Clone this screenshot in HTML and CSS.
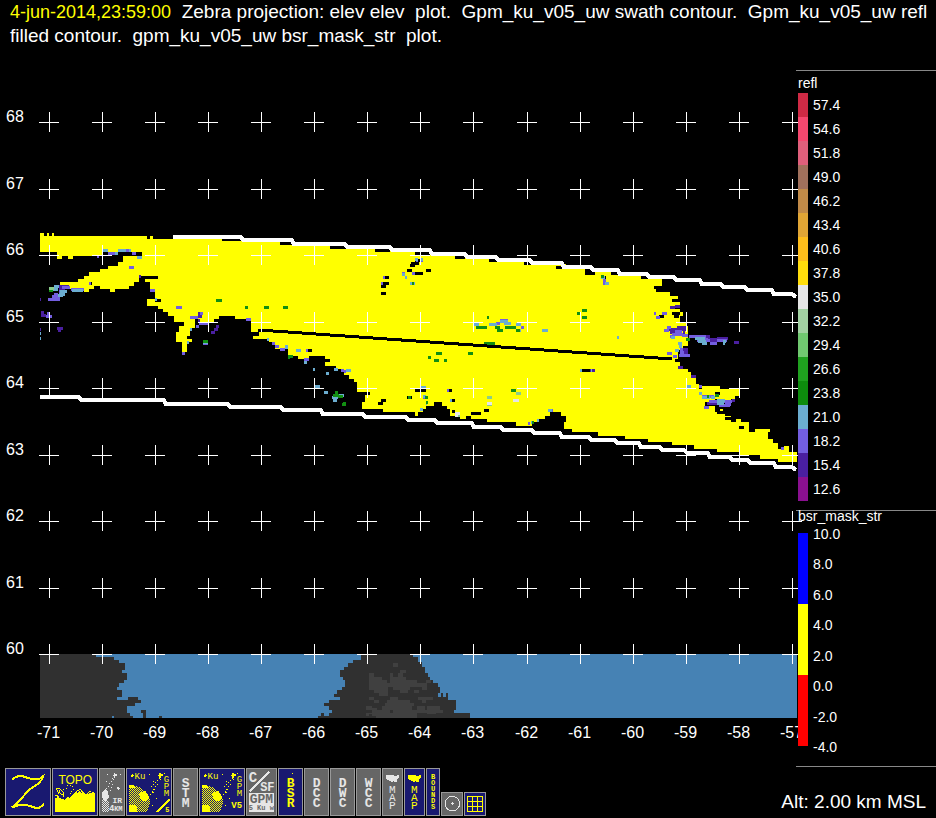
FILE: index.html
```html
<!DOCTYPE html>
<html lang="en">
  <head>
    <meta charset="UTF-8">
    <title>Zebra projection</title>
    <link rel="stylesheet" href="styles.css">
  </head>
  <body>
    <header class="title">
      <p><time class="when">4-jun-2014,23:59:00</time>  Zebra projection: elev elev  plot.  Gpm_ku_v05_uw swath contour.  Gpm_ku_v05_uw refl filled contour.  gpm_ku_v05_uw bsr_mask_str  plot.</p>
    </header>

    <main class="display">
      <svg class="plot" viewBox="0 70 796 697" role="img" aria-label="Swath plot">
        <defs>
          <path id="cross" d="M-10 .5H10M.5 -10V10"/>
          <g id="row">
            <use href="#cross" x="49"/>
            <use href="#cross" x="102"/>
            <use href="#cross" x="155"/>
            <use href="#cross" x="208"/>
            <use href="#cross" x="261"/>
            <use href="#cross" x="314"/>
            <use href="#cross" x="367"/>
            <use href="#cross" x="420"/>
            <use href="#cross" x="473"/>
            <use href="#cross" x="527"/>
            <use href="#cross" x="580"/>
            <use href="#cross" x="633"/>
            <use href="#cross" x="686"/>
            <use href="#cross" x="739"/>
            <use href="#cross" x="792"/>
          </g>
        </defs>

        <!-- terrain -->
        <g transform="translate(0 640) scale(.33333)">
          <path class="sea" d="M120 42H2391V234H120z"/>
          <path class="land" d="M120 42H288V51H342V60H357V69H375V90H366V99H381V120H372V129H357V141H351V150H366V171H351V180H384V171H414V180H423V189H405V198H381V219H390V228H399V234H120zM423 210H438V234H429V219H423zM477 228H486V234H477z"/>
          <path class="land" d="M1083 42V51H1074V60H1059V69H1044V81H1032V90H1020V111H1029V120H1035V141H1026V150H1011V162H1002V171H1020V180H987V189H972V198H987V210H996V219H987V228H972V219H963V228H954V234H1410V219H1362V210H1368V180H1344V159H1338V171H1329V159H1323V171H1314V159H1320V141H1314V129H1299V120H1290V111H1284V99H1275V81H1266V66H1254V51H1239V42z"/>
          <path class="sea" d="M303 45H324V51H303zM1074 51H1083V60H1074zM336 228H342V234H336z"/>
          <path class="hill" d="M1179 69H1194V81H1179zM1107 99H1122V111H1146V120H1161V129H1170V99H1179V111H1194V99H1200V90H1218V99H1209V111H1218V120H1251V129H1278V120H1293V129H1281V150H1266V141H1230V150H1224V159H1200V150H1179V141H1164V168H1137V159H1122V150H1107zM1242 150H1257V159H1242zM1107 171H1122V180H1137V189H1122V180H1107zM1254 171H1299V180H1278V189H1266V180H1254zM1170 171H1194V180H1230V189H1242V198H1236V210H1251V198H1275V210H1281V198H1320V210H1329V219H1308V222H1281V219H1251V234H1128V228H1098V219H1116V210H1098V198H1116V204H1131V210H1146V198H1155V189H1161V180H1170z"/>
          <path class="land" d="M1170 210H1179V219H1170zM1107 222H1116V234H1107z"/>
        </g>

        <!-- bsr mask -->
        <g class="mask" transform="translate(30 225) scale(.33333)">
          <path d="M30 24H42V33H51V24H57V33H66V24H72V33H351V41H360V33H369V41H750V372H735V358H726V350H717V341H669V333H687V321H663V282H615V273H567V282H552V291H510V282H495V309H483V318H480V333H471V342H486V350H471V381H456V350H438V321H447V303H462V291H432V273H414V261H399V252H384V243H351V222H375V192H360V171H345V162H384V153H327V171H312V183H297V192H255V200H240V192H210V183H192V192H177V200H162V192H120V183H90V171H144V162H162V153H177V141H210V132H234V123H264V111H279V93H320V101H336V81H219V93H129V101H114V93H96V101H81V81H30z"/>
        </g>
        <g class="mask" transform="translate(280 225) scale(.33333)">
          <path d="M0 50H42L200 60L336 71L456 81L560 92L654 102L750 106V603H708V591H603V582H540V573H510V552H501V543H486V531H462V543H438V552H429V561H414V573H405V561H309V552H246V531H255V501H231V471H222V461H207V450H192V432H168V423H135V393H87V402H54V393H24V372H0z"/>
        </g>
        <g class="mask" transform="translate(530 240) scale(.33333)">
          <path d="M0 72H96L183 84L264 94L351 104L375 117H396V137H372V147H378V156H420V168H444V177H426V186H450V198H420V207H450V216H459V228H450V246H468V258H474V318H459V330H444V357H435V366H450V378H444V387H474V396H483V414H498V432H507V447H516V438H570V447H627V468H615V477H603V486H585V477H555V486H525V498H555V516H570V507H585V528H603V546H618V537H633V546H657V576H675V567H720V576H714V597H729V609H744V627H762V618H777V636H801V666H744V657H690V645H630V636H561V627H492V616H426V606H354V597H285V588H204V576H126V567H102V546H108V528H93V516H60V528H45V537H21V546H6V558H0z"/>
        </g>

        <!-- reflectivity cells, west part -->
        <g class="cells" transform="translate(30 225) scale(.33333)">
          <path class="gap" d="M576 45H636M177 177H186M375 226H393M495 295H510M684 317H708"/>
          <path class="low" d="M30 223H33M33 262H42M33 273H48M81 312H99M84 317H93M84 184H117M87 190H105M327 156H333M504 266H510M504 276H516M504 286H510M558 306H567M552 315H564M543 324H555M30 313H33"/>
          <path class="mid" d="M234 86H264M306 87H318M288 76H300M297 127H312M96 187H120M72 209H84M66 216H90M54 224H90M87 200H96M123 194H162M360 196H375M438 247H456M480 277H504M510 266H519M507 297H534M498 304H507M48 274H66M51 266H60M519 356H534M456 385H465M648 285H663M726 355H735M735 366H747M750 375H765M177 176H184M201 96H207"/>
          <path class="high" d="M219 76H234M264 76H288M297 76H303M255 86H264M321 97H336M72 186H87M69 195H84M90 201H111M87 208H105M84 213H99M126 198H160M375 225H381M480 314H486M471 354H478M519 352H534M711 345H717M765 366H774M30 327H33M30 340H33"/>
          <path class="green" d="M57 196H69M558 226H576M645 247H654M702 247H717M759 247H774M519 350H534M774 397H780"/>
          <path class="pale" d="M57 191H72"/>
        </g>

        <!-- middle part -->
        <g class="cells" transform="translate(280 225) scale(.33333)">
          <path class="gap" d="M0 57H40M150 67H198M285 76H330M405 86H450M525 97H555M627 106H651M732 117H753M405 106H420M393 115H417M390 123H405M381 136H396M438 136H453M399 147H429M309 157H327M303 177H327M303 186H318M303 207H318M81 377H96M135 406H150M255 507H270M303 526H318M294 537H309M405 496H438M381 517H396M501 496H516M510 526H525M573 567H603M612 556H627M558 577H573M603 586H621M516 561H525"/>
          <path class="mid" d="M408 106H414M420 106H429M366 145H375M396 146H405M309 157H314M303 177H309M0 375H15M72 405H87M78 377H84M192 440H198M183 436H192M201 436H213M429 517H442M501 496H507M648 295H660M660 287H684M723 308H732M744 597H750"/>
          <path class="high" d="M405 105H413M422 104H428M366 149H375M375 157H381M390 177H405M582 299H597M627 298H651M660 291H684M672 297H692M708 298H723M717 316H723M15 368H24M48 377H63M72 414H81M99 435H105M138 445H148M162 435H174M198 436H213M105 484H120M132 504H144M156 519H174M160 526H171M177 513H192M423 487H438M429 516H438M420 555H429M510 528H516M438 537H442"/>
          <path class="green" d="M396 177H402M9 247H24M621 277H627M588 308H621M645 308H660M651 316H669M675 307H708M708 316H720M612 356H645M468 387H486M444 398H453M462 406H477M492 406H501M564 387H579M24 396H38M165 504H174M160 512H177M174 516H190M190 536H198M187 540H198M384 517H393M435 519H444M438 533H444M693 496H708M756 594H762"/>
          <path class="pale" d="M621 517H636M708 507H723M621 540H636M531 573H540"/>
          <path class="white" d="M621 536H635M699 526H717M525 566H540M525 573H534"/>
        </g>

        <!-- east part -->
        <g class="cells" transform="translate(530 240) scale(.33333)">
          <path class="gap" d="M78 83H96M165 92H195M165 101H195M243 101H270M333 112H357M222 112H228M150 392H183M387 231H402M426 222H450M432 230H447M555 460H570M561 519H585M580 511H585M627 562H642M585 537H603"/>
          <path class="low" d="M180 392H195M420 203H435M435 200H450M441 262H471M417 270H471M420 279H435M459 279H465M528 290H540M534 298H561M540 306H561M612 309H627M561 297H594M459 328H474M462 337H474M459 345H468M483 410H498M444 384H459M531 491H561M606 482H615M592 494H603"/>
          <path class="mid" d="M219 122H228M219 132H228M372 222H378M396 222H411M378 232H390M402 271H417M411 264H423M436 275H456M426 283H458M420 291H435M456 287H474M477 291H528M525 298H534M500 302H540M561 301H590M540 311H561M450 328H459M450 337H462M411 342H426M447 347H480M429 351H441M507 441H516M515 470H552M537 486H560M580 486H606M585 495H603M522 502H537M567 498H600M753 626H762M62 511H69"/>
          <path class="high" d="M213 114H225M225 131H237M36 271H54M261 293H267M183 392H187M495 295H525M504 304H528M516 311H531M579 306H588M579 312H584M444 312H456M447 319H456M435 331H447M423 293H435M471 441H483M507 461H516M516 472H540M543 472H554M561 483H585M561 490H582M54 511H66M150 391H155M3 549H9M21 541H27"/>
          <path class="green" d="M213 109H222M156 211H171M141 222H150M156 232H171M468 300H480M530 470H537M555 466H568M6 549H12"/>
        </g>

        <!-- orbit track and swath edges -->
        <path class="track" d="M259 330L672 359"/>
        <g class="swath">
          <path d="M173 237H241L243 240H292L294 244H345L347 247H390L392 250H430L432 254H465L467 257H496L498 260H530L532 263H562L564 267H591L593 270H618L620 274H647L649 277H674L676 280H700L702 284H721L723 287H745L747 290H772L774 294H792L796 297"/>
          <path d="M40 397H79L81 400H164L166 404H228L230 407H281L283 410H321L323 414H363L365 417H406L408 420H435L437 423H472L474 427H501L503 430H532L534 433H560L562 437H589L591 440H615L617 443H639L641 447H660L662 450H684L687 453H708L710 457H730L732 460H748L750 463H774L776 467H792L796 470"/>
        </g>

        <g class="grid">
          <use href="#row" y="122"/>
          <use href="#row" y="189"/>
          <use href="#row" y="255"/>
          <use href="#row" y="322"/>
          <use href="#row" y="388"/>
          <use href="#row" y="455"/>
          <use href="#row" y="521"/>
          <use href="#row" y="588"/>
          <use href="#row" y="654"/>
        </g>

        <g class="axis">
          <text x="6" y="122">68</text>
          <text x="6" y="189">67</text>
          <text x="6" y="255">66</text>
          <text x="6" y="322">65</text>
          <text x="6" y="388">64</text>
          <text x="6" y="455">63</text>
          <text x="6" y="521">62</text>
          <text x="6" y="588">61</text>
          <text x="6" y="654">60</text>
        </g>
        <g class="axis">
          <text x="37" y="738">-71</text>
          <text x="90" y="738">-70</text>
          <text x="143" y="738">-69</text>
          <text x="196" y="738">-68</text>
          <text x="249" y="738">-67</text>
          <text x="302" y="738">-66</text>
          <text x="355" y="738">-65</text>
          <text x="408" y="738">-64</text>
          <text x="461" y="738">-63</text>
          <text x="515" y="738">-62</text>
          <text x="568" y="738">-61</text>
          <text x="621" y="738">-60</text>
          <text x="674" y="738">-59</text>
          <text x="727" y="738">-58</text>
          <text x="780" y="738">-57</text>
        </g>
      </svg>

      <aside class="legends">
        <section class="legend refl">
          <h2>refl</h2>
          <ul class="steps">
            <li class="c17">57.4</li>
            <li class="c16">54.6</li>
            <li class="c15">51.8</li>
            <li class="c14">49.0</li>
            <li class="c13">46.2</li>
            <li class="c12">43.4</li>
            <li class="c11">40.6</li>
            <li class="c10">37.8</li>
            <li class="c9">35.0</li>
            <li class="c8">32.2</li>
            <li class="c7">29.4</li>
            <li class="c6">26.6</li>
            <li class="c5">23.8</li>
            <li class="c4">21.0</li>
            <li class="c3">18.2</li>
            <li class="c2">15.4</li>
            <li class="c1">12.6</li>
          </ul>
        </section>
        <section class="legend bsr">
          <h2>bsr_mask_str</h2>
          <div class="scale">
            <div class="bar"></div>
            <ul class="ticks">
              <li>10.0</li>
              <li>8.0</li>
              <li>6.0</li>
              <li>4.0</li>
              <li>2.0</li>
              <li>0.0</li>
              <li>-2.0</li>
              <li>-4.0</li>
            </ul>
          </div>
        </section>
      </aside>
    </main>

    <footer class="bottom">
      <nav class="toolbar">
        <button class="on" aria-label="Zebra">
          <svg width="44" height="46" viewBox="18 21 132 138">
            <path class="pen" d="M36 54L42 48L54 43H69L84 48L99 52H114L123 48L129 43L126 52L117 63L105 72L90 81L78 93L66 108L54 120L45 129L36 136L48 132L60 128H75L90 132L105 137H117L126 132L132 124"/>
          </svg>
        </button>
        <button class="on" aria-label="Topo">
          <svg width="44" height="46" viewBox="159 21 132 138">
            <text class="label wide" x="226" y="66">TOPO</text>
            <path class="fill" d="M165 150V108L174 105L186 111L195 114L201 105L210 108L216 99L225 93L231 84L240 81L249 90L258 96L267 87L276 90L285 93V150z"/>
            <path class="pen thin" d="M168 78L174 90L189 99L192 105M168 78L180 81L189 90L192 102M174 96L180 84M165 99L177 104"/>
            <path class="dots" d="M189 84L198 72L213 69L222 78L219 90L207 96M198 78L216 90"/>
            <path class="hole" d="M231 94L234 88L240 86L245 92M264 97L270 90L276 93"/>
          </svg>
        </button>
        <button aria-label="IR 4km">
          <svg width="24" height="46" viewBox="300 21 72 138">
            <path class="fill" d="M338 40H341V34H344V37H350V43H344V49H341V43H338zM306 92L318 81L324 90L327 105L321 114L312 117L306 105z"/>
            <path class="check" d="M306 115H321M309 118H324M306 121H327M309 124H327M306 127H327M309 130H327M306 133H327M309 136H327M306 139H327M309 142H327M306 145H327M309 148H327"/>
            <path class="dots" d="M339 48L318 84M342 50L330 90M321 36H327M360 36H363M318 57H322"/>
            <path class="pen thin" d="M352 79L355 76L358 79L355 82z"/>
            <text class="label" x="352" y="122" font-size="24">IR</text>
            <text class="label" x="335" y="146" font-size="27">4</text>
            <text class="label" x="355" y="146" font-size="21">KM</text>
          </svg>
        </button>
        <button class="on" aria-label="Ku GPM/5">
          <svg width="44" height="46" viewBox="381 21 132 138">
            <g id="dish">
              <path class="check" d="M387 71H405M390 74H411M387 77H420M390 80H423M387 83H429M390 86H432M387 89H438M390 92H438M387 95H441M390 98H444M387 101H444M390 104H447M387 107H447M390 110H450M387 113H450M390 116H450M387 119H450M390 122H450M387 125H450M390 128H450M387 131H447M390 134H447M387 137H447M390 140H444M387 143H444M390 146H441M387 149H441"/>
              <path class="fill" d="M417 96L432 87L444 99L447 111L435 117L423 114zM387 129H405L411 138V150H387zM387 69H402L408 78H387zM474 40H477V34H483V37H489V43H483V49H477V43H474z"/>
              <path class="dots" d="M480 48L438 90M483 51L447 105M459 57H463M459 90H463M456 129H460M492 33H495M447 36H450M468 108H471"/>
              <path class="pen thin" d="M394 41L397 38L400 41L397 44z"/>
            </g>
            <text class="label plain" x="420" y="52" font-size="27">Ku</text>
            <text class="label plain" font-size="27"><tspan x="499" y="60">G</tspan><tspan x="499" y="81">P</tspan><tspan x="499" y="102">M</tspan></text>
            <path class="fill" d="M468 150L504 111H509V117L477 150z"/>
            <text class="label" x="502" y="150" font-size="21">5</text>
          </svg>
        </button>
        <button aria-label="STM">
          <svg width="23" height="46" viewBox="522 21 69 138">
            <text class="label thick"><tspan x="557" y="75">S</tspan><tspan x="557" y="105">T</tspan><tspan x="557" y="135">M</tspan></text>
          </svg>
        </button>
        <button class="on" aria-label="Ku GPM V5">
          <svg width="44" height="46" viewBox="381 21 132 138">
            <use href="#dish"/>
            <text class="label plain" x="420" y="52" font-size="27">Ku</text>
            <text class="label plain" font-size="27"><tspan x="499" y="60">G</tspan><tspan x="499" y="81">P</tspan><tspan x="499" y="102">M</tspan></text>
            <text class="label" x="491" y="138" font-size="27">V5</text>
          </svg>
        </button>
        <button aria-label="C/SF GPM 5 Ku w">
          <svg width="29" height="46" viewBox="21 21 87 138">
            <text class="label" x="39" y="60" font-size="42">C</text>
            <path class="pen" d="M30 88L88 30"/>
            <text class="label" x="82" y="87" font-size="36">SF</text>
            <path class="fill" d="M27 93H102V150H27z"/>
            <text class="label dark" x="64" y="123" font-size="39">GPM</text>
            <text class="label dark" x="64" y="145" font-size="21">5 Ku w</text>
          </svg>
        </button>
        <button class="on" aria-label="BSR">
          <svg width="23" height="46" viewBox="117 21 69 138">
            <path class="fill" d="M156 33H159V36H156z"/>
            <text class="label thick"><tspan x="152" y="75">B</tspan><tspan x="152" y="105">S</tspan><tspan x="152" y="135">R</tspan></text>
          </svg>
        </button>
        <button aria-label="DCC">
          <svg width="23" height="46" viewBox="195 21 69 138">
            <text class="label thick"><tspan x="230" y="75">D</tspan><tspan x="230" y="105">C</tspan><tspan x="230" y="135">C</tspan></text>
          </svg>
        </button>
        <button aria-label="DWC">
          <svg width="23" height="46" viewBox="273 21 69 138">
            <text class="label thick"><tspan x="308" y="75">D</tspan><tspan x="308" y="105">W</tspan><tspan x="308" y="135">C</tspan></text>
          </svg>
        </button>
        <button aria-label="WCC">
          <svg width="23" height="46" viewBox="351 21 69 138">
            <text class="label thick"><tspan x="386" y="75">W</tspan><tspan x="386" y="105">C</tspan><tspan x="386" y="135">C</tspan></text>
          </svg>
        </button>
        <button aria-label="Map">
          <svg width="19" height="46" viewBox="429 21 57 138">
            <path id="states" class="fill" d="M438 39H459L465 42L474 39H477V45L471 51V60H465L459 57L456 63L450 57L441 54L438 48z"/>
            <text class="label plain tall"><tspan x="457" y="93">M</tspan><tspan x="457" y="117">A</tspan><tspan x="457" y="141">P</tspan></text>
          </svg>
        </button>
        <button class="on" aria-label="Map overlay">
          <svg width="19" height="46" viewBox="429 21 57 138">
            <use href="#states"/>
            <text class="label plain tall"><tspan x="457" y="93">M</tspan><tspan x="457" y="117">A</tspan><tspan x="457" y="141">P</tspan></text>
          </svg>
        </button>
        <button class="on" aria-label="Bounds">
          <svg width="12" height="46" viewBox="561 21 36 138">
            <text class="label small"><tspan x="579" y="51">B</tspan><tspan x="579" y="69">O</tspan><tspan x="579" y="87">U</tspan><tspan x="579" y="105">N</tspan><tspan x="579" y="123">D</tspan><tspan x="579" y="141">S</tspan></text>
          </svg>
        </button>
        <button aria-label="Range rings">
          <svg width="20" height="22" viewBox="606 93 60 66">
            <circle class="pen thin" cx="637" cy="125" r="22"/>
            <path class="pen thin" d="M632 125H642M637 120V130"/>
          </svg>
        </button>
        <button class="on" aria-label="Grid">
          <svg width="20" height="22" viewBox="675 93 60 66">
            <path class="pen thin" d="M682 103H727V148H682zM697 103V148M712 103V148M682 118H727M682 133H727"/>
          </svg>
        </button>
      </nav>
      <p class="alt">Alt: 2.00 km MSL</p>
    </footer>
  </body>
</html>
```
FILE: styles.css
```css
* {
  box-sizing: border-box;
}

body {
  margin: 0;
  background: #000;
  color: #fff;
  font-family: "Liberation Sans", Arial, sans-serif;
}

p, h2, ul {
  margin: 0;
  padding: 0;
  font-weight: normal;
  list-style: none;
}

.title {
  min-height: 70px;
  padding-left: 10px;
  font-size: 19px;
  line-height: 24px;
}

.title p {
  white-space: pre-wrap;
}

.when {
  color: #ffff00;
  font-size: 18px;
}

/* plot and legends */
.display {
  display: grid;
  grid-template-columns: 1fr 140px;
}

.plot {
  display: block;
  width: 100%;
  overflow: visible;
  shape-rendering: crispEdges;
}

.sea { fill: #4682b4; }
.land { fill: #303030; }
.hill { fill: #404040; }
.mask { fill: #ffff00; }

.cells {
  fill: none;
  stroke-width: 9;
}

.cells .gap { stroke: #000; }
.cells .low { stroke: #4a1fa0; }
.cells .mid { stroke: #735ee0; }
.cells .high { stroke: #6badd0; }
.cells .green { stroke: #128f12; }
.cells .pale { stroke: #8acc8a; }
.cells .white { stroke: #e6e6e6; }

.track {
  stroke: #000;
  stroke-width: 3;
}

.swath {
  fill: none;
  stroke: #fff;
  stroke-width: 4;
}

.grid {
  fill: none;
  stroke: #fff;
  stroke-width: 1;
}

.axis {
  fill: #fff;
  font-size: 16px;
}

.legends {
  position: relative;
  font-size: 14px;
}

.legend {
  padding-left: 2px;
  border-top: 1px solid #888;
}

.legend h2 {
  font-size: 14px;
  line-height: 24px;
}

.refl {
  padding-bottom: 9px;
}

.refl h2 {
  height: 22px;
}

.steps li {
  padding-left: 5px;
  border-left: 10px solid;
  line-height: 24px;
}

.steps .c17 { border-color: #cf2a45; }
.steps .c16 { border-color: #f5476e; }
.steps .c15 { border-color: #df5f7b; }
.steps .c14 { border-color: #a0705c; }
.steps .c13 { border-color: #c08a48; }
.steps .c12 { border-color: #e0a535; }
.steps .c11 { border-color: #fdbd1b; }
.steps .c10 { border-color: #ffdd0c; }
.steps .c9 { border-color: #e6e6e6; }
.steps .c8 { border-color: #a2d1a2; }
.steps .c7 { border-color: #70c870; }
.steps .c6 { border-color: #1fa01f; }
.steps .c5 { border-color: #0d8c0d; }
.steps .c4 { border-color: #6badd0; }
.steps .c3 { border-color: #735ee0; }
.steps .c2 { border-color: #4a1fa0; }
.steps .c1 { border-color: #8a1090; }

.bsr {
  padding-bottom: 9px;
  border-bottom: 1px solid #888;
}

.bsr h2 {
  line-height: 10px;
}

.scale {
  display: flex;
  gap: 5px;
  height: 233px;
  margin-top: 3px;
}

.bar {
  width: 10px;
  margin: 9px 0 11px;
  background: linear-gradient(#00f 0 71px, #ff0 71px 142px, #f00 142px);
}

.ticks {
  display: flex;
  flex-direction: column;
  justify-content: space-between;
  line-height: 20px;
}

/* toolbar */
.bottom {
  display: flex;
  justify-content: space-between;
  align-items: flex-end;
  padding: 1px 10px 2px 5px;
}

.toolbar {
  display: flex;
  align-items: flex-end;
  gap: 1px;
}

.toolbar button {
  padding: 0;
  border: 1px solid #999;
  background: #666;
  color: #e6e6e6;
}

.toolbar .on {
  background: #191970;
  color: #ffff00;
}

.toolbar svg {
  display: block;
  shape-rendering: crispEdges;
}

.fill { fill: currentColor; }

.pen {
  fill: none;
  stroke: currentColor;
  stroke-width: 6;
}

.thin {
  stroke-width: 3;
}

.dots, .check {
  fill: none;
  stroke: currentColor;
  stroke-width: 3;
}

.dots { stroke-dasharray: 3 6; }
.check { stroke-dasharray: 3; }

.hole {
  fill: none;
  stroke: #191970;
  stroke-width: 3;
}

.label {
  fill: currentColor;
  font-family: "Liberation Mono", monospace;
  font-weight: bold;
  text-anchor: middle;
}

.label.plain { font-weight: normal; }

.label.wide {
  font-family: "Liberation Sans", Arial, sans-serif;
  font-size: 36px;
  font-weight: normal;
}

.label.thick {
  font-size: 39px;
}

.label.tall { font-size: 33px; }
.label.small { font-size: 21px; }
.label.dark { fill: #666; }

.alt {
  font-size: 19px;
  line-height: 28px;
}
```
